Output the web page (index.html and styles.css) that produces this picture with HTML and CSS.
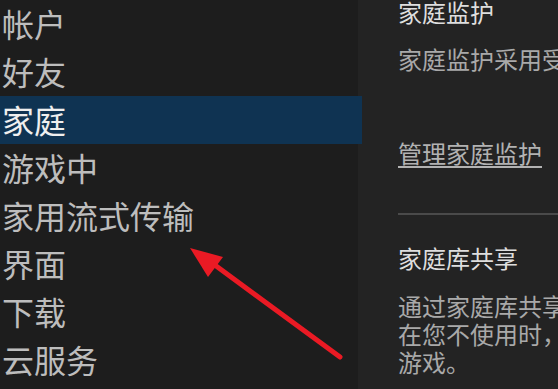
FILE: index.html
```html
<!DOCTYPE html>
<html lang="zh-CN">
<head>
<meta charset="utf-8">
<link rel="stylesheet" href="styles.css">
</head>
<body>
<div class="page">
  <nav class="nav">
    <div class="nav-item">帐户</div>
    <div class="nav-item">好友</div>
    <div class="nav-item selected">家庭</div>
    <div class="nav-item">游戏中</div>
    <div class="nav-item">家用流式传输</div>
    <div class="nav-item">界面</div>
    <div class="nav-item">下载</div>
    <div class="nav-item">云服务</div>
  </nav>
  <main class="panel">
    <div class="heading first">家庭监护</div>
    <div class="para p1">家庭监护采用受限模式，让您可以控制</div>
    <a class="link">管理家庭监护</a>
    <div class="sep"></div>
    <div class="heading second">家庭库共享</div>
    <div class="para p2">
      <div class="line">通过家庭库共享，您可以让家人</div>
      <div class="line">在您不使用时，游玩您的</div>
      <div class="line">游戏。</div>
    </div>
  </main>
</div>
<svg class="arrow" width="558" height="389" viewBox="0 0 558 389">
  <line x1="340" y1="357" x2="208" y2="260" stroke="#ea1a24" stroke-width="5" stroke-linecap="round"/>
  <polygon points="190,248 223,257 208,277" fill="#ea1a24"/>
</svg>
</body>
</html>
```
FILE: styles.css
```css
html, body {
  margin: 0;
  padding: 0;
  width: 558px;
  height: 389px;
  overflow: hidden;
  background: #232323;
  font-family: "Noto Sans CJK SC", "Noto Sans", sans-serif;
}
.page {
  display: flex;
  width: 558px;
  height: 389px;
}
.nav {
  width: 358px;
  flex: none;
  background: #1d1d1d;
  display: flex;
  flex-direction: column;
}
.nav-item {
  height: 48px;
  box-sizing: border-box;
  padding-bottom: 2px;
  line-height: 46px;
  font-size: 32px;
  color: #bdbdbd;
  padding-left: 2px;
  white-space: nowrap;
}
.nav-item.selected {
  width: 362px;
  background: #0f3352;
  color: #efefef;
  position: relative;
  z-index: 1;
}
.panel {
  flex: 1;
  min-width: 0;
  background: #232323;
  padding-left: 40px;
  overflow: hidden;
  display: flex;
  flex-direction: column;
  align-items: flex-start;
  font-size: 24px;
  white-space: nowrap;
}
.heading {
  line-height: 24px;
  color: #dedede;
}
.heading.first { margin-top: 0; }
.para {
  line-height: 28px;
  color: #a9a9a9;
}
.p1 { margin-top: 21px; }
.link {
  margin-top: 66px;
  line-height: 28px;
  color: #b2b2b2;
  text-decoration: underline;
  text-underline-offset: 3px;
}
.sep {
  margin-top: 46px;
  height: 2px;
  width: 200px;
  background: #4a4a4a;
}
.heading.second { margin-top: 31px; }
.p2 { margin-top: 22px; }
.arrow {
  position: absolute;
  left: 0;
  top: 0;
  z-index: 5;
  pointer-events: none;
}
```
